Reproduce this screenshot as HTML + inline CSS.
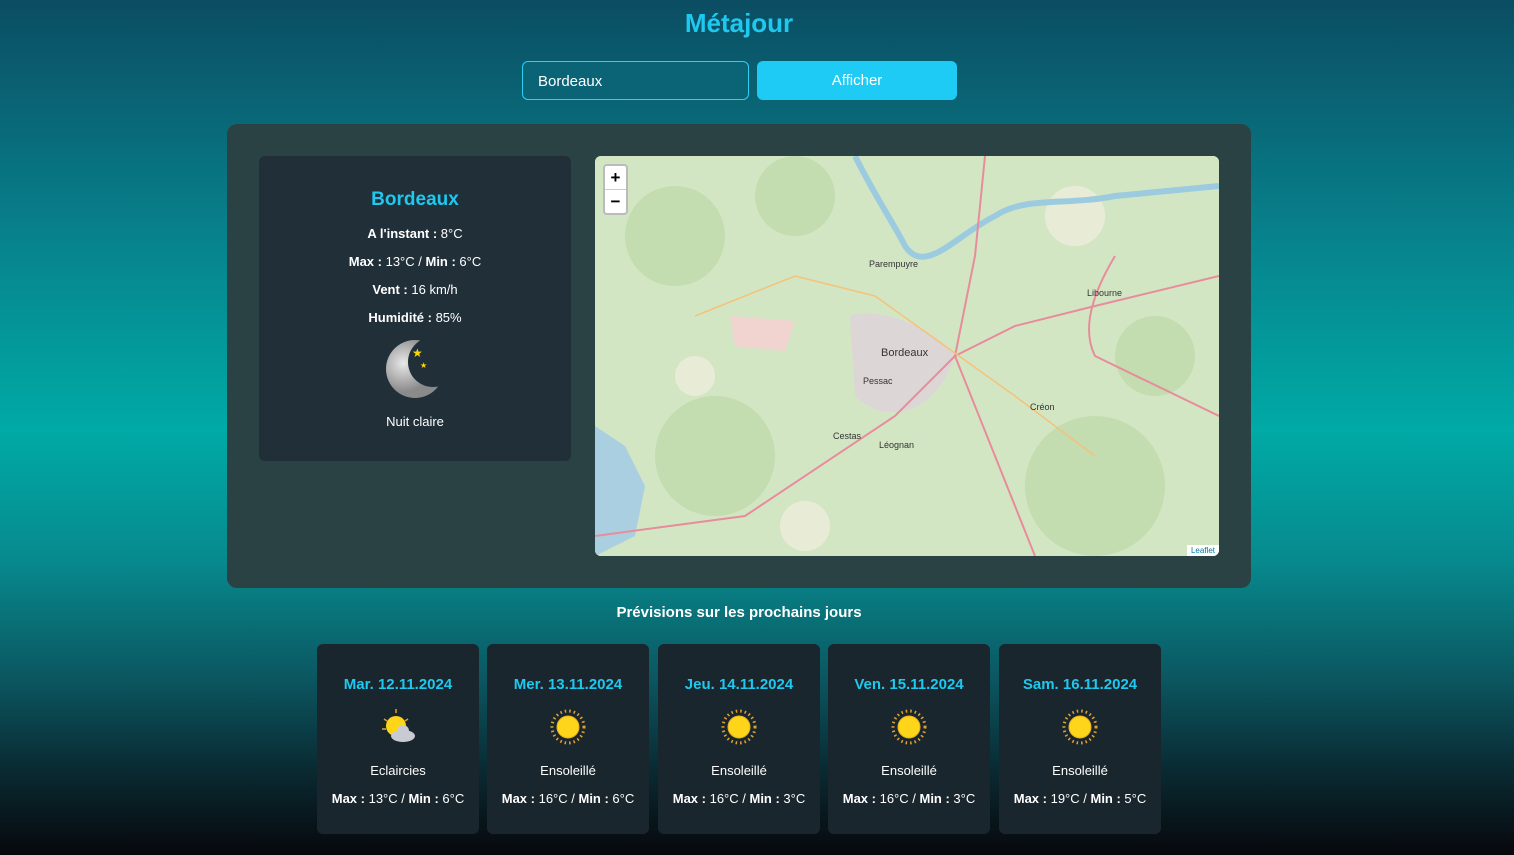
<!DOCTYPE html>
<html><head><meta charset="utf-8"><style>
*{box-sizing:border-box;margin:0;padding:0}
body{width:1514px;height:855px;overflow:hidden;font-family:"Liberation Sans",sans-serif;color:#fff;
background:linear-gradient(to bottom,#0b4d62 0px,#07858f 250px,#00aaa6 430px,#078a8e 560px,#0b5660 680px,#0a2a32 770px,#07080c 855px);position:relative}
h1{position:absolute;top:8px;left:0;width:1478px;text-align:center;color:#1ec8ef;font-size:26px;font-weight:bold}
.inp{position:absolute;left:522px;top:61px;width:227px;height:39px;border:1px solid #2ad0f0;border-radius:6px;background:#0a6476;font-size:15px;padding:11px 15px}
.btn{position:absolute;left:757px;top:61px;width:200px;height:39px;border-radius:6px;background:#1ecbf4;font-size:15px;text-align:center;line-height:40px}
.panel{position:absolute;left:227px;top:124px;width:1024px;height:464px;background:#2b4244;border-radius:10px}
.card{position:absolute;left:259px;top:156px;width:312px;height:305px;background:#212f38;border-radius:6px;text-align:center;font-size:13px}
.card h2{color:#1ec8ef;font-size:19px;margin-top:33px;margin-bottom:15px}
.card p{margin-bottom:13px;line-height:15px}
.map{position:absolute;left:595px;top:156px;width:624px;height:400px;border-radius:6px;overflow:hidden;background:#cfe3c0}
.zoom{position:absolute;left:8px;top:8px;width:25px;height:51px;background:#fff;border:2px solid #bbb;border-radius:4px;color:#000;font-size:17px;font-weight:bold;text-align:center;line-height:23px}
h3{position:absolute;top:604px;width:1478px;text-align:center;font-size:15px}
.f{position:absolute;top:644px;width:162px;height:190px;background:#1a262d;border-radius:6px;text-align:center;font-size:13px}
.f .d{color:#1ec8ef;font-weight:bold;font-size:15px;margin-top:32px}
.f svg{margin-top:14px}
.f .t{margin-top:13px}
.f .m{margin-top:13px}
</style></head><body>
<h1>Métajour</h1>
<div class="inp">Bordeaux</div>
<div class="btn">Afficher</div>
<div class="panel"></div>
<div class="card">
<h2>Bordeaux</h2>
<p><b>A l'instant :</b> 8°C</p>
<p><b>Max :</b> 13°C / <b>Min :</b> 6°C</p>
<p><b>Vent :</b> 16 km/h</p>
<p><b>Humidité :</b> 85%</p>
<svg width="60" height="62" viewBox="0 0 60 62" style="margin-left:4px;display:block;margin:0 auto 0 126px"><defs><radialGradient id="mg" cx="0.3" cy="0.4"><stop offset="0" stop-color="#e8e8e8"/><stop offset="1" stop-color="#8a8a8a"/></radialGradient></defs>
<circle cx="30" cy="31" r="29" fill="url(#mg)"/>
<circle cx="48" cy="24" r="25" fill="#212f38"/>
<text x="27" y="19" fill="#ffd700" font-size="12">★</text><text x="35" y="30" fill="#ffd700" font-size="8">★</text></svg>
<p style="margin-top:14px">Nuit claire</p>
</div>
<div class="map">
<svg width="624" height="400" style="position:absolute;left:0;top:0">
<rect width="624" height="400" fill="#d3e6c4"/>
<g fill="#c3dcb0"><circle cx="80" cy="80" r="50"/><circle cx="120" cy="300" r="60"/><circle cx="500" cy="330" r="70"/><circle cx="560" cy="200" r="40"/><circle cx="200" cy="40" r="40"/></g>
<g fill="#e8ecd6"><circle cx="100" cy="220" r="20"/><circle cx="210" cy="370" r="25"/><circle cx="480" cy="60" r="30"/></g>
<path d="M0 270 L30 290 L50 330 L40 380 L0 400Z" fill="#a9cfe0"/>
<path d="M260 0 C280 40 300 70 310 90 C330 120 360 80 400 60 C430 40 470 50 520 40 L624 30" stroke="#9ccbe0" stroke-width="6" fill="none"/>
<path d="M135 160 L200 165 L190 195 L140 190Z" fill="#f1d4d0"/>
<path d="M255 160 C280 150 340 170 360 200 C340 260 290 270 260 240Z" fill="#ddd6d6"/>
<path d="M0 380 L150 360 L300 260 L360 200 L420 170 L500 150 L624 120" stroke="#e88c9c" stroke-width="2" fill="none"/>
<path d="M390 0 L380 100 L360 200 L440 400" stroke="#e88c9c" stroke-width="2" fill="none"/>
<path d="M520 100 C490 150 490 180 500 200 L624 260" stroke="#e88c9c" stroke-width="2" fill="none"/>
<path d="M100 160 L200 120 L280 140 L350 190 L420 240 L500 300" stroke="#f5c27a" stroke-width="1.5" fill="none"/>
<g font-size="9" fill="#333" font-family="Liberation Sans"><text x="286" y="200" font-size="11">Bordeaux</text><text x="274" y="111">Parempuyre</text><text x="492" y="140">Libourne</text><text x="284" y="292">Léognan</text><text x="435" y="254">Créon</text><text x="268" y="228">Pessac</text><text x="238" y="283">Cestas</text></g>
</svg>
<div class="zoom">+<div style="border-top:1px solid #ccc">−</div></div>
<div style="position:absolute;right:0;bottom:0;background:#fff;color:#0078a8;font-size:8px;padding:1px 4px">Leaflet</div>
</div>
<h3>Prévisions sur les prochains jours</h3>
<div class="f" style="left:317px"><div class="d">Mar. 12.11.2024</div><svg width="40" height="40" viewBox="0 0 40 40"><g stroke="#e0a030" stroke-width="1.5"><line x1="18" y1="2" x2="18" y2="6"/><line x1="6" y1="12" x2="9" y2="14"/><line x1="30" y1="12" x2="27" y2="14"/><line x1="4" y1="22" x2="8" y2="22"/></g><circle cx="18" cy="19" r="10" fill="#ffd51a"/><ellipse cx="25" cy="29" rx="12" ry="6" fill="#c8ccd2"/><circle cx="25" cy="24" r="6" fill="#c8ccd2"/></svg><div class="t">Eclaircies</div><div class="m"><b>Max :</b> 13°C / <b>Min :</b> 6°C</div></div>
<div class="f" style="left:487px"><div class="d">Mer. 13.11.2024</div><svg width="40" height="40" viewBox="0 0 40 40"><circle cx="20" cy="20" r="16" fill="none" stroke="#e0a030" stroke-width="3" stroke-dasharray="1.5 3"/><circle cx="20" cy="20" r="11" fill="#ffd51a" stroke="#e8b020"/></svg><div class="t">Ensoleillé</div><div class="m"><b>Max :</b> 16°C / <b>Min :</b> 6°C</div></div>
<div class="f" style="left:658px"><div class="d">Jeu. 14.11.2024</div><svg width="40" height="40" viewBox="0 0 40 40"><circle cx="20" cy="20" r="16" fill="none" stroke="#e0a030" stroke-width="3" stroke-dasharray="1.5 3"/><circle cx="20" cy="20" r="11" fill="#ffd51a" stroke="#e8b020"/></svg><div class="t">Ensoleillé</div><div class="m"><b>Max :</b> 16°C / <b>Min :</b> 3°C</div></div>
<div class="f" style="left:828px"><div class="d">Ven. 15.11.2024</div><svg width="40" height="40" viewBox="0 0 40 40"><circle cx="20" cy="20" r="16" fill="none" stroke="#e0a030" stroke-width="3" stroke-dasharray="1.5 3"/><circle cx="20" cy="20" r="11" fill="#ffd51a" stroke="#e8b020"/></svg><div class="t">Ensoleillé</div><div class="m"><b>Max :</b> 16°C / <b>Min :</b> 3°C</div></div>
<div class="f" style="left:999px"><div class="d">Sam. 16.11.2024</div><svg width="40" height="40" viewBox="0 0 40 40"><circle cx="20" cy="20" r="16" fill="none" stroke="#e0a030" stroke-width="3" stroke-dasharray="1.5 3"/><circle cx="20" cy="20" r="11" fill="#ffd51a" stroke="#e8b020"/></svg><div class="t">Ensoleillé</div><div class="m"><b>Max :</b> 19°C / <b>Min :</b> 5°C</div></div>
</body></html>
